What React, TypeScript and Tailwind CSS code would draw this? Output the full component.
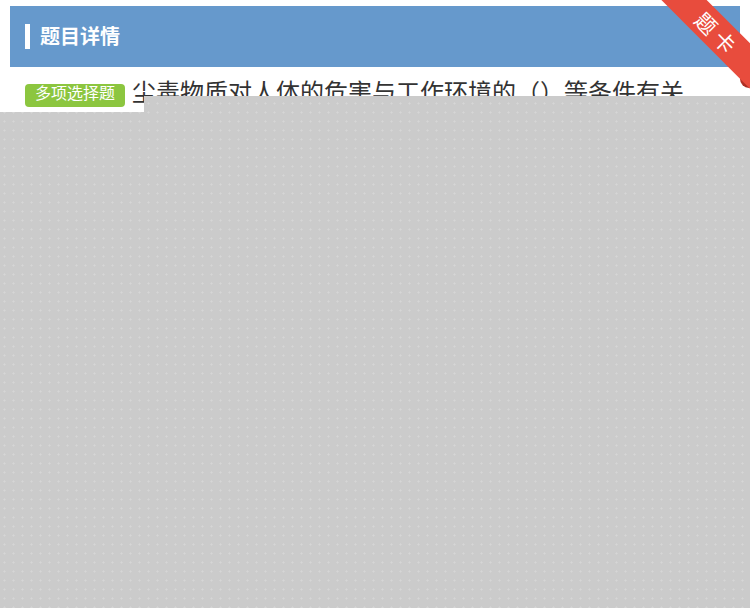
import React from "react";

const DOTS =
  "bg-[#cbcbcb] bg-[radial-gradient(circle,#d6d6d6_0.8px,transparent_1.3px)] bg-[length:9px_9px] bg-fixed";

function Ribbon() {
  return (
    <div className="absolute top-0 right-0 w-[92px] h-[96px] overflow-hidden pointer-events-none">
      {/* curl behind the band */}
      <div className="absolute right-0 top-[62px] w-[10px] h-[26px] rounded-bl-[9px] bg-gradient-to-b from-[#e2473a] to-[#a52b20]" />
      <div className="absolute left-[-17px] top-[16px] w-[150px] h-[32px] rotate-45 bg-[#e84c3d] flex items-center justify-center pl-[5px] text-white text-[21px] leading-none tracking-[5px]">
        题卡
      </div>
    </div>
  );
}

export default function App() {
  return (
    <div className="relative w-[750px] h-[608px] bg-white overflow-hidden font-['Noto_Sans_CJK_SC',sans-serif]">
      <div className="pt-[6px] px-[10px]">
        <div className="h-[61px] bg-[#6699cc] flex items-center pl-[15px]">
          <span className="w-[5px] h-[25px] bg-white mr-[10px]" />
          <span className="text-white text-[20px] font-bold leading-none -mt-[2px]">题目详情</span>
        </div>

        <div className="flex items-start px-[15px] pt-[6px]">
          <span className="shrink-0 mt-[11px] h-[23px] px-[10px] rounded-[4px] bg-[#8cc63f] text-white text-[16px] leading-[17px]">
            多项选择题
          </span>
          <p className="ml-[7px] text-[24px] leading-[36px] text-[#333333]">
            尘毒物质对人体的危害与工作环境的（）等条件有关
          </p>
        </div>
      </div>

      <Ribbon />

      {/* loading mask */}
      <div className={`absolute left-[144px] top-[96px] right-0 bottom-0 ${DOTS}`} />
      <div className={`absolute left-0 top-[112px] w-[144px] bottom-0 ${DOTS}`} />
    </div>
  );
}
